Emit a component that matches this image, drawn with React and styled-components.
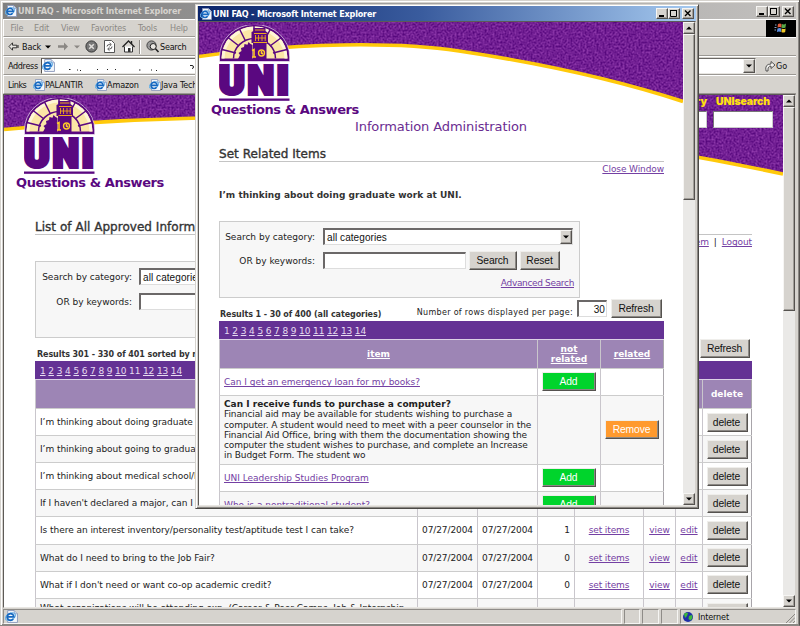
import React from "react";
import styled, { createGlobalStyle, css } from "styled-components";

const Global = createGlobalStyle`
  * { box-sizing: border-box; }
  body { margin: 0; background: #d6d3ce; overflow: hidden; }
`;
const verdana = '"DejaVu Sans", Verdana, sans-serif';
const tahoma = '"DejaVu Sans Condensed", Tahoma, sans-serif';
const arial = '"Liberation Sans", Arial, sans-serif';

const raised = css`
  background: #d6d3ce;
  border: 1px solid;
  border-color: #f6f5f3 #55524f #55524f #f6f5f3;
  box-shadow: inset -1px -1px 0 #a19e99;
`;

/* ---------- window chrome ---------- */
const Desktop = styled.div`
  position: relative;
  width: 800px;
  height: 626px;
  overflow: hidden;
  font-family: ${verdana};
  font-size: 9px;
  color: #222;
  white-space: nowrap;
`;
const BackWindow = styled.div`
  display: flex;
  flex-direction: column;
  width: 800px;
  height: 626px;
  padding: 3px 3px 1px 3px;
  background: #d6d3ce;
  border-right: 1px solid #55524f;
  border-bottom: 1px solid #8a8783;
  box-shadow: inset 1px 1px 0 #d6d3ce, inset 2px 2px 0 #fff, inset -1px -1px 0 #8a8783;
`;
const PopupWindow = styled.div`
  position: absolute;
  left: 195px;
  top: 4px;
  width: 504px;
  height: 505px;
  display: flex;
  flex-direction: column;
  padding: 1px 2px 2px 2px;
  background: #d6d3ce;
  border: 1px solid;
  border-color: #d6d3ce #4a4845 #4a4845 #d6d3ce;
  box-shadow: inset 1px 1px 0 #fff, inset -1px -1px 0 #8a8783;
`;
const TitleBar = styled.div`
  display: flex;
  align-items: center;
  flex: none;
  height: ${(p) => (p.$active ? 15 : 16)}px;
  padding: 0 2px;
  color: ${(p) => (p.$active ? "#fff" : "#d6d3ce")};
  background: ${(p) =>
    p.$active
      ? "linear-gradient(90deg, #0a246a, #3a5c9e 45%, #a6caf0)"
      : "linear-gradient(90deg, #808080, #c2c0be)"};
  font: bold 9px ${tahoma};
  letter-spacing: -0.19px;
`;
const TitleText = styled.span`
  flex: 1;
  margin-left: 1px;
`;
const CaptionButton = styled.span`
  ${raised}
  display: flex;
  width: 12px;
  height: 11px;
  margin-left: ${(p) => p.$gap || 0}px;
  svg { display: block; }
`;
const Bar = styled.div`
  display: flex;
  align-items: center;
  flex: none;
  height: ${(p) => p.$h}px;
  padding-left: 4px;
  border-top: 1px solid #fff;
  border-bottom: 1px solid #9b9893;
  border-left: 1px solid #fff;
  font: 9px ${tahoma};
  letter-spacing: -0.15px;
  color: ${(p) => (p.$dim ? "#8b8884" : "#111")};
`;
const BarItem = styled.span`
  display: flex;
  align-items: center;
  flex: none;
  width: ${(p) => p.$w}px;
  letter-spacing: ${(p) => p.$ls || -0.15}px;
`;
const Throbber = styled.span`
  display: flex;
  align-items: center;
  justify-content: center;
  width: 30px;
  height: 17px;
  margin-left: auto;
  background: #000;
`;
const AddressField = styled.span`
  display: flex;
  align-items: center;
  flex: 1;
  height: 16px;
  background: #fff;
  border: 1px solid;
  border-color: #6b6865 #e8e6e2 #e8e6e2 #55524f;
`;
const AddressTail = styled.span`
  display: flex;
  align-items: center;
  width: 40px;
  height: 18px;
  padding-left: 9px;
  font-size: 9px;
`;
const DropButton = styled.span`
  ${raised}
  display: flex;
  align-items: center;
  justify-content: center;
  flex: none;
  width: 12px;
  height: 14px;
  margin-left: auto;
`;
const Viewport = styled.div`
  display: flex;
  flex: 1;
  min-height: 0;
  border-top: 1px solid #5d5a57;
  border-left: 1px solid #5d5a57;
  border-right: 1px solid #d6d3ce;
  border-bottom: 1px solid #e8e6e2;
`;
const Page = styled.div`
  flex: 1;
  min-width: 0;
  overflow: hidden;
  background: #fff;
`;
const Scrollbar = styled.div`
  display: flex;
  flex-direction: column;
  flex: none;
  width: 12px;
  background: #eae9e7;
`;
const ScrollButton = styled.span`
  ${raised}
  display: flex;
  align-items: center;
  justify-content: center;
  height: 12px;
`;
const Thumb = styled.span`
  ${raised}
  height: ${(p) => p.$h}px;
  margin-bottom: auto;
`;
const StatusBar = styled.div`
  display: flex;
  gap: 2px;
  flex: none;
  height: 15px;
  margin-top: 1px;
  font: 9px ${tahoma};
  letter-spacing: -0.15px;
  color: #111;
`;
const StatusPane = styled.span`
  display: flex;
  align-items: center;
  gap: 4px;
  flex: ${(p) => (p.$w ? "none" : 1)};
  width: ${(p) => p.$w || 0}px;
  padding-left: 1px;
  border: 1px solid;
  border-color: #8f8c88 #f6f5f3 #f6f5f3 #8f8c88;
`;
const Grip = styled.span`
  display: flex;
  align-self: flex-end;
  margin-left: auto;
`;

/* ---------- page content ---------- */
const Banner = styled.header`
  position: relative;
  height: 81px;
  > svg:first-child { display: block; }
`;
const LogoMark = styled.svg`
  position: absolute;
  left: 20px;
  top: 3px;
`;
const BannerSearch = styled.div`
  position: absolute;
  right: 10px;
  top: 0;
  display: flex;
  gap: 6px;
  color: #ffe010;
  font: 900 10.5px Inter, ${arial};
`;
const BannerField = styled.label`
  display: flex;
  flex-direction: column;
  gap: 2px;
  width: 60px;
  text-align: ${(p) => (p.$end ? "right" : "center")};
  letter-spacing: -0.12px;
  line-height: 14px;
`;
const BannerInput = styled.span`
  height: 17px;
  background: #fff;
  border: 1px solid;
  border-color: #777 #ccc #ccc #777;
`;
const Brand = styled.div`
  height: 14px;
  padding-left: 12px;
  font: bold 13px/14px ${verdana};
  letter-spacing: -0.42px;
  color: #5a0880;
`;
const Subtitle = styled.div`
  height: 19px;
  padding-left: 156px;
  font-size: 13px;
  line-height: 19px;
  letter-spacing: -0.097px;
  color: #6a2c91;
`;
const SectionTitle = styled.h1`
  width: ${(p) => p.$w}px;
  height: ${(p) => p.$h}px;
  margin: ${(p) => p.$top}px 0 0 ${(p) => p.$left}px;
  border-bottom: 1px solid #c4c4c4;
  font: normal 12px/13px ${verdana};
  letter-spacing: 0.03px;
  -webkit-text-stroke: 0.35px #333;
  color: #333;
`;
const TopLinks = styled.div`
  display: flex;
  justify-content: flex-end;
  gap: 5px;
  width: ${(p) => p.$w}px;
  height: 15px;
  line-height: 15px;
  letter-spacing: -0.1px;
`;
const Link = styled.a`
  color: #7440a3;
  text-decoration: underline;
  text-underline-offset: 1px;
  text-decoration-thickness: 1px;
  text-decoration-skip-ink: none;
`;
const Question = styled.h2`
  margin: 10px 0 0 20px;
  font: bold 9px/16px ${verdana};
  letter-spacing: 0.03px;
  color: #333;
`;
const SearchBox = styled.form`
  display: flex;
  flex-direction: column;
  width: ${(p) => p.$w}px;
  height: 77px;
  margin: ${(p) => p.$top}px 0 0 ${(p) => p.$left}px;
  padding: 6px 5px 0 0;
  background: #f7f7f7;
  border: 1px solid #ccc;
`;
const FormRow = styled.div`
  display: flex;
  align-items: center;
  height: ${(p) => p.$h}px;
  margin-bottom: ${(p) => p.$gap}px;
`;
const Label = styled.span`
  width: ${(p) => p.$w}px;
  margin-right: ${(p) => 103 - p.$w}px;
  text-align: right;
`;
const Field = styled.span`
  display: flex;
  align-items: center;
  flex: none;
  width: ${(p) => p.$w}px;
  height: 17px;
  padding-left: 2px;
  background: #fff;
  border: 2px solid;
  border-width: 2px 1px 1px 2px;
  border-color: #6b6868 #ddd #ddd #6b6868;
  font: 10px ${arial};
  letter-spacing: 0.07px;
  color: #111;
`;
const RowCount = styled(Field)`
  width: 30px;
  justify-content: flex-end;
  padding-right: 1px;
`;
const Button = styled.button`
  flex: none;
  width: ${(p) => p.$w}px;
  height: ${(p) => p.$h || 19}px;
  margin: 0 0 0 ${(p) => p.$ml || 0}px;
  padding: 1px 1px 0 0;
  background: ${(p) => p.$bg || "#d6d3ce"};
  border: 1px solid;
  border-color: #efeeeb #55524f #55524f #efeeeb;
  box-shadow: inset -1px -1px 0 #8b8884;
  font: 10.3px ${arial};
  letter-spacing: -0.12px;
  line-height: 14px;
  color: ${(p) => (p.$bg ? "#fff" : "#111")};
`;
const AdvancedRow = styled.div`
  padding-top: 1px;
  text-align: right;
  letter-spacing: -0.34px;
  line-height: 11px;
`;
const ResultBar = styled.div`
  display: flex;
  justify-content: space-between;
  width: ${(p) => p.$w}px;
  height: 23px;
  margin-left: ${(p) => p.$left}px;
  padding: 0 2px 0 1px;
`;
const ResultText = styled.span`
  padding-top: 12px;
  font: bold 8px/10px ${verdana};
  letter-spacing: -0.08px;
  color: #333;
`;
const RowsControl = styled.div`
  display: flex;
  align-items: flex-start;
  padding-top: ${(p) => p.$top}px;
`;
const RowsLabel = styled.span`
  margin-right: 4px;
  padding-top: 7px;
  font-size: 8px;
  line-height: 13px;
  letter-spacing: 0.31px;
`;
const CountSlot = styled.span`
  display: flex;
  padding-top: 1px;
`;
const Table = styled.div`
  width: ${(p) => p.$w}px;
  margin-left: ${(p) => p.$left}px;
`;
const Pager = styled.div`
  display: flex;
  height: 18px;
  padding: 1px 0 0 5px;
  align-items: center;
  background: #643294;
  color: #e6dcf0;
  letter-spacing: -0.13px;
  white-space: pre;
  a { text-decoration: underline; text-underline-offset: 1px; text-decoration-skip-ink: none; }
`;
const Row = styled.div`
  display: grid;
  grid-template-columns: ${(p) => p.$cols};
  height: ${(p) => p.$h}px;
  background: ${(p) => (p.$head ? "#9d85b5" : p.$alt ? "#f7f7f7" : "#fff")};
  color: ${(p) => (p.$head ? "#fff" : "#222")};
  border-top: 1px solid ${(p) => (p.$head ? "#dcd2e6" : "#ccc")};
`;
const Cell = styled.div`
  display: flex;
  align-items: center;
  justify-content: ${(p) => p.$align || "center"};
  min-width: 0;
  overflow: hidden;
  padding: 0 4px;
  border-left: 1px solid #c9c6cc;
  letter-spacing: ${(p) => p.$ls || 0}px;
  line-height: 10.17px;
  white-space: pre;
  &:last-child { border-right: 1px solid #a8a5aa; }
`;
const HeadLabel = styled.b`
  white-space: pre-line;
  text-align: center;
  text-decoration: ${(p) => (p.$plain ? "none" : "underline")};
  text-underline-offset: 1px;
`;
const Answer = styled.div`
  white-space: pre;
  letter-spacing: -0.1px;
  b { letter-spacing: 0; }
`;

/* ---------- drawings ---------- */
const IEIcon = ({ s = 12 }) => (
  <svg width={s} height={s} viewBox="0 0 12 12">
    <path d="M2.5 .5h6l3 3v8h-9z" fill="#f3f6fb" stroke="#8796b8" strokeWidth=".8" />
    <path d="M8.5 .5v3h3" fill="#c9d5ec" stroke="#8796b8" strokeWidth=".6" />
    <ellipse cx="5" cy="6.2" rx="5" ry="3" fill="none" stroke="#67b1e8" strokeWidth="1" transform="rotate(-28 5 6.2)" />
    <path d="M2 6.4h6.2A3.1 3.1 0 1 0 7.6 8.3" fill="none" stroke="#1668c0" strokeWidth="1.6" />
  </svg>
);
const Tri = ({ up, fill = "#000" }) => (
  <svg width="6" height="4" viewBox="0 0 6 4">
    <path d={up ? "M0 3.5L3 .5 6 3.5z" : "M0 .5h6L3 3.5z"} fill={fill} />
  </svg>
);
const WindowButtons = () => (
  <>
    <CaptionButton>
      <svg width="10" height="9"><rect x="2" y="6" width="5" height="2" /></svg>
    </CaptionButton>
    <CaptionButton>
      <svg width="10" height="9">
        <path d="M1.5 1v6.5h6V1M1 1.5h7" fill="none" stroke="#000" />
      </svg>
    </CaptionButton>
    <CaptionButton $gap={2}>
      <svg width="10" height="9">
        <path d="M2 1.5l5.5 5.5M7.5 1.5L2 7" stroke="#000" strokeWidth="1.4" />
      </svg>
    </CaptionButton>
  </>
);
const Scroll = ({ h }) => (
  <Scrollbar>
    <ScrollButton><Tri up /></ScrollButton>
    <Thumb $h={h} />
    <ScrollButton><Tri /></ScrollButton>
  </Scrollbar>
);
const Wave = ({ id, w, curve }) => (
  <svg width={w} height="84">
    <defs>
      <clipPath id={id + "c"}><path d={`${curve}V0H0z`} /></clipPath>
      <filter id={id + "n"} x="0" y="0" width="1" height="1">
        <feTurbulence type="fractalNoise" baseFrequency=".5" numOctaves="2" seed="4" />
        <feColorMatrix values="0 0 0 0 .45  0 0 0 0 .1  0 0 0 0 .58  1.1 0 0 0 -.25" />
      </filter>
    </defs>
    <g clipPath={`url(#${id}c)`}>
      <rect width={w} height="84" fill="#55067c" />
      <rect width={w} height="84" filter={`url(#${id}n)`} />
    </g>
    <path d={curve} fill="none" stroke="#ffc90a" strokeWidth="3.6" />
  </svg>
);
const Logo = () => (
  <LogoMark width="72" height="78" viewBox="0 0 72 78">
    <path d="M0.5 36.5V32A35 32.5 0 0 1 70.7 32V36.5z" fill="#5a0880" stroke="#fff" strokeWidth=".6" />
    <path d="M2.5 33.5A33 32 0 0 1 68.5 33.5z" fill="#fbe7a6" />
    <path d="M2.5 33.5A33 32 0 0 1 68.5 33.5h-3A30 29 0 0 0 5.5 33.5z" fill="#fff6d6" />
    <path d="M14.5 33.5A21 20 0 0 1 56.5 33.5" fill="none" stroke="#5a0880" strokeWidth="1.5" />
    <path d="M3 24.5L17 28M9 12.5L20 21M20.5 4L26.5 16M35 1V14M51.5 4L45 16M62.5 12.5L51 21M68 24.5L54 28" stroke="#5a0880" strokeWidth="1.5" />
    <path d="M19 34l2-4-1.5-2 3-2-.5-3 3-1 .5-3 3 .8 1-2.8 2 2 2 1v14z" fill="#5a0880" />
    <path d="M34 34V18h-1.5V7l2-1V3l12 0V6l2.5 2v10.5h-1.5V34z" fill="#5a0880" />
    <path d="M35 8.5h12.500M36 5h9.500M34.500 17.500h13.500" stroke="#f0a81c" strokeWidth="1.1" />
    <path d="M36.5 10v6M39.5 10v6M43 10v6M46.2 10v6M36 13h11" stroke="#f0a81c" strokeWidth=".9" />
    <circle cx="42.5" cy="28" r="3" fill="#5a0880" stroke="#ffcc28" strokeWidth="1.3" />
    <path d="M42.500 26v2l1.500 1M33 25.500l2-1v7.500M33 32h4" fill="none" stroke="#ffcc28" strokeWidth="1.6" />
    <g fill="#5a0880" stroke="#5a0880" strokeWidth="4" fontFamily="Roboto, sans-serif" fontWeight="900" fontSize="38">
      <text x="0" y="68.5" textLength="25.6" lengthAdjust="spacingAndGlyphs">U</text>
      <text x="28.8" y="68.5" textLength="26" lengthAdjust="spacingAndGlyphs">N</text>
      <text x="57.8" y="68.5" textLength="12" lengthAdjust="spacingAndGlyphs">I</text>
    </g>
    <rect x="0" y="73.5" width="70.5" height="2.3" fill="#5a0880" />
  </LogoMark>
);

const PageLinks = ({ current }) => (
  <Pager>
    {Array.from({ length: 14 }, (_, i) => i + 1).map((n) => (
      <React.Fragment key={n}>
        {n === current ? <span>{n}</span> : <a>{n}</a>}
        <span> </span>
      </React.Fragment>
    ))}
  </Pager>
);

/* ---------- main window ---------- */
const QUESTIONS = [
  ["I’m thinking about doing graduate work at UNI.", 0],
  ["I’m thinking about going to graduate school.", 0],
  ["I’m thinking about medical school/law school.", 0],
  ["If I haven't declared a major, can I get help?", 0],
  ["Is there an interest inventory/personality test/aptitude test I can take?", 1],
  ["What do I need to bring to the Job Fair?", 0],
  ["What if I don't need or want co-op academic credit?", 0],
  ["What organizations will be attending exp. (Career & Peer Camps, Job & Internship\nFair)?", 0],
];
const LIST_COLS = "382px 60px 60px 37px 69px 32px 27px 50px";

const MainPage = () => (
  <Page>
    <Banner>
      <Wave id="m" w={779} curve="M0 34.5C200 15 420 20 560 41C640 52 700 62 779 79" />
      <Logo />
      <BannerSearch>
        <BannerField $end>library<BannerInput /></BannerField>
        <BannerField>UNIsearch<BannerInput /></BannerField>
      </BannerSearch>
    </Banner>
    <Brand>Questions &amp; Answers</Brand>
    <SectionTitle $w={717} $h={14} $top={31} $left={31}>
      List of All Approved Information
    </SectionTitle>
    <TopLinks $w={748}>
      <Link>Add Item</Link>|<Link>Logout</Link>
    </TopLinks>
    <SearchBox $w={361} $top={11} $left={31}>
      <FormRow $h={17} $gap={7}>
        <Label $w={96}>Search by category:</Label>
        <Field $w={250}>all categories</Field>
      </FormRow>
      <FormRow $h={19} $gap={0}>
        <Label $w={96}>OR by keywords:</Label>
        <Field $w={143} />
      </FormRow>
    </SearchBox>
    <ResultBar $w={716} $left={32}>
      <ResultText>Results 301 - 330 of 401 sorted by name</ResultText>
      <RowsControl $top={1}>
        <Button $w={50}>Refresh</Button>
      </RowsControl>
    </ResultBar>
    <Table $w={717} $left={31}>
      <PageLinks current={11} />
      <Row $head $h={29} $cols={LIST_COLS}>
        <Cell /><Cell /><Cell /><Cell /><Cell /><Cell /><Cell />
        <Cell><HeadLabel $plain>delete</HeadLabel></Cell>
      </Row>
      {QUESTIONS.map(([q, n], i) => (
        <Row key={q} $h={i === 7 ? 29 : 27.12} $alt={i % 2} $cols={LIST_COLS}>
          <Cell $align="flex-start" $ls={-0.045}>{q}</Cell>
          <Cell $ls={-0.09}>07/27/2004</Cell>
          <Cell $ls={-0.09}>07/27/2004</Cell>
          <Cell $align="flex-end">{n}</Cell>
          <Cell $ls={-0.12}><Link>set items</Link></Cell>
          <Cell><Link>view</Link></Cell>
          <Cell><Link>edit</Link></Cell>
          <Cell><Button $w={41}>delete</Button></Cell>
        </Row>
      ))}
    </Table>
  </Page>
);

const MainWindow = () => (
  <BackWindow>
    <TitleBar>
      <IEIcon />
      <TitleText>UNI FAQ - Microsoft Internet Explorer</TitleText>
      <WindowButtons />
    </TitleBar>
    <Bar $h={18} $dim>
      <BarItem $w={26}>&nbsp;File</BarItem>
      <BarItem $w={27}>Edit</BarItem>
      <BarItem $w={30}>View</BarItem>
      <BarItem $w={47}>Favorites</BarItem>
      <BarItem $w={32}>Tools</BarItem>
      <BarItem $w={30}>Help</BarItem>
      <Throbber>
        <svg width="14" height="12" viewBox="0 0 14 12">
          <path d="M4 2q2-1 3.500 0v3.500q-2-1-4 0z" fill="#e05a3a" />
          <path d="M8 2q2 1 4-.500l-.5 4q-2 1-4 0z" fill="#58a848" />
          <path d="M3.500 6.500q2-1 3.800 0l-.4 3.500q-2-1-4 0z" fill="#5b8ee0" />
          <path d="M7.800 6.500q2 1 3.800 0l-.4 3.500q-2 1-3.800 0z" fill="#f0c828" />
          <path d="M1 3h1.500M.5 5.500h2M.5 8h1.500" stroke="#8aa4c8" />
        </svg>
      </Throbber>
    </Bar>
    <Bar $h={19}>
      <BarItem $w={14}>
        <svg width="11" height="9" viewBox="0 0 11 9">
          <path d="M4.500 .8L1 4.500l3.500 3.700V5.800h4.300V3.200H4.500z" fill="#e8e6e2" stroke="#222" strokeWidth=".9" />
          <path d="M10 3v3" stroke="#222" />
        </svg>
      </BarItem>
      <BarItem $w={23}>Back</BarItem>
      <BarItem $w={13}><Tri /></BarItem>
      <BarItem $w={16}>
        <svg width="11" height="9" viewBox="0 0 11 9">
          <path d="M0 3.200h6V.5l4 4-4 4V5.800H0z" fill="#8b8884" />
        </svg>
      </BarItem>
      <BarItem $w={11}><Tri fill="#8b8884" /></BarItem>
      <BarItem $w={19}>
        <svg width="13" height="13" viewBox="0 0 13 13">
          <circle cx="6.500" cy="6.500" r="5.600" fill="#777" stroke="#333" />
          <path d="M4.200 4.200l4.600 4.600M8.800 4.200L4.200 8.800" stroke="#e0dedb" strokeWidth="1.500" />
        </svg>
      </BarItem>
      <BarItem $w={18}>
        <svg width="11" height="13" viewBox="0 0 11 13">
          <path d="M.5 .5h7l3 3v9H.5z" fill="#fff" stroke="#555" />
          <path d="M3 6.500q0-2 2.500-2h1M5.500 2.800l1.800 1.700-1.800 1.700M8 6.500q0 2.500-2.500 2.500h-1M5.500 7.300L3.700 9l1.800 1.700" fill="none" stroke="#444" strokeWidth=".9" />
        </svg>
      </BarItem>
      <BarItem $w={17}>
        <svg width="13" height="13" viewBox="0 0 13 13">
          <path d="M2.500 6.500v5.500h8V6.500" fill="#fff" stroke="#333" />
          <path d="M.5 7L6.500 1l6 6" fill="none" stroke="#222" strokeWidth="1.300" />
          <path d="M9.500 1v3" stroke="#222" strokeWidth="1.400" />
          <rect x="6" y="8" width="2.500" height="4" fill="#333" />
        </svg>
      </BarItem>
      <BarItem $w={7}>
        <svg width="2" height="14"><path d="M.5 0v14" stroke="#8b8884" /><path d="M1.500 0v14" stroke="#fff" /></svg>
      </BarItem>
      <BarItem $w={14}>
        <svg width="14" height="13" viewBox="0 0 14 13">
          <circle cx="5.500" cy="5.500" r="4.600" fill="#9a9a9a" stroke="#444" />
          <circle cx="7.200" cy="6.500" r="3" fill="#e8e6e2" stroke="#222" />
          <path d="M9.500 8.700L12.500 12" stroke="#222" strokeWidth="1.600" />
        </svg>
      </BarItem>
      <BarItem $w={40} $ls={-0.25}>Search</BarItem>
    </Bar>
    <Bar $h={19}>
      <BarItem $w={33} $ls={-0.35}>Address</BarItem>
      <AddressField>
        <IEIcon s={13} />
        <svg width="142" height="10" viewBox="0 0 142 10">
          <path d="M14 8.500h1.500M22 9h1M25 9.500h1M42 8.500h1M52 8.500h1M60 8.500h1M84 9h1.500M96 9h1M101 9.500h1M135 4.500h2q1.500 0 1.500 1.500t-1.500 1.500" fill="none" stroke="#222" />
        </svg>
        <DropButton><Tri /></DropButton>
      </AddressField>
      <AddressTail>
        <svg width="11" height="12" viewBox="0 0 11 12">
          <path d="M1 11Q-.5 4 6 4V1.500L10 5 6 8.500V6Q2.500 6 3 11z" fill="#f4f3f1" stroke="#333" strokeWidth=".8" />
        </svg>
        Go
      </AddressTail>
    </Bar>
    <Bar $h={19}>
      <BarItem $w={25} $ls={-0.5}>Links</BarItem>
      <BarItem $w={62}><IEIcon />PALANTIR</BarItem>
      <BarItem $w={54}><IEIcon />Amazon</BarItem>
      <BarItem $w={60}><IEIcon />Java Tech</BarItem>
    </Bar>
    <Viewport>
      <MainPage />
      <Scroll h={204} />
    </Viewport>
    <StatusBar>
      <StatusPane><IEIcon s={13} /></StatusPane>
      <StatusPane $w={16} />
      <StatusPane $w={17} />
      <StatusPane $w={17} />
      <StatusPane $w={116}>
        <svg width="12" height="12" viewBox="0 0 12 12">
          <circle cx="6" cy="6" r="5" fill="#1f2fa8" />
          <path d="M2 3q2-2 4-1l-1 3-2 2zM7 5l3-1 .5 3-2 2.500L6.500 8z" fill="#3cb83c" />
        </svg>
        Internet
        <Grip>
          <svg width="10" height="10" viewBox="0 0 10 10">
            <path d="M1 10l9-9M4.500 10L10 4.500M8 10l2-2" stroke="#8b8884" />
          </svg>
        </Grip>
      </StatusPane>
    </StatusBar>
  </BackWindow>
);

/* ---------- popup window ---------- */
const ITEM_COLS = "318px 63px 64px";
const AddRow = ({ children, alt }) => (
  <Row $h={27.2} $alt={alt} $cols={ITEM_COLS}>
    <Cell $align="flex-start" $ls={-0.02}><Link>{children}</Link></Cell>
    <Cell><Button $w={54} $bg="#00d42c">Add</Button></Cell>
    <Cell />
  </Row>
);

const Popup = () => (
  <PopupWindow>
    <TitleBar $active>
      <IEIcon />
      <TitleText>UNI FAQ - Microsoft Internet Explorer</TitleText>
      <WindowButtons />
    </TitleBar>
    <Viewport>
      <Page>
        <Banner>
          <Wave id="p" w={484} curve="M0 34.5C100 20 200 20 260 29S400 52 484 79.5" />
          <Logo />
        </Banner>
        <Brand>Questions &amp; Answers</Brand>
        <Subtitle>Information Administration</Subtitle>
        <SectionTitle $w={445} $h={14} $top={12} $left={20}>Set Related Items</SectionTitle>
        <TopLinks $w={465}><Link>Close Window</Link></TopLinks>
        <Question>I’m thinking about doing graduate work at UNI.</Question>
        <SearchBox $w={361} $top={18} $left={20}>
          <FormRow $h={17} $gap={6}>
            <Label $w={95}>Search by category:</Label>
            <Field $w={250}>all categories<DropButton><Tri /></DropButton></Field>
          </FormRow>
          <FormRow $h={19} $gap={7}>
            <Label $w={95}>OR by keywords:</Label>
            <Field $w={143} />
            <Button $w={48} $ml={3}>Search</Button>
            <Button $w={40} $ml={3}>Reset</Button>
          </FormRow>
          <AdvancedRow><Link>Advanced Search</Link></AdvancedRow>
        </SearchBox>
        <ResultBar $w={445} $left={20}>
          <ResultText>Results 1 - 30 of 400 (all categories)</ResultText>
          <RowsControl $top={1}>
            <RowsLabel>Number of rows displayed per page:</RowsLabel>
            <CountSlot><RowCount>30</RowCount></CountSlot>
            <Button $w={51} $ml={4}>Refresh</Button>
          </RowsControl>
        </ResultBar>
        <Table $w={445} $left={20}>
          <PageLinks current={1} />
          <Row $head $h={28.5} $cols={ITEM_COLS}>
            <Cell><HeadLabel>item</HeadLabel></Cell>
            <Cell><HeadLabel>{"not\nrelated"}</HeadLabel></Cell>
            <Cell><HeadLabel>related</HeadLabel></Cell>
          </Row>
          <AddRow>Can I get an emergency loan for my books?</AddRow>
          <Row $h={69} $alt $cols={ITEM_COLS}>
            <Cell $align="flex-start">
              <Answer>
                <b>Can I receive funds to purchase a computer?</b>
                {`
Financial aid may be available for students wishing to purchase a
computer. A student would need to meet with a peer counselor in the
Financial Aid Office, bring with them the documentation showing the
computer the student wishes to purchase, and complete an Increase
in Budget Form. The student wo`}
              </Answer>
            </Cell>
            <Cell />
            <Cell><Button $w={54} $bg="#ff9a2e">Remove</Button></Cell>
          </Row>
          <AddRow>UNI Leadership Studies Program</AddRow>
          <AddRow alt>Who is a nontraditional student?</AddRow>
        </Table>
      </Page>
      <Scroll h={166} />
    </Viewport>
  </PopupWindow>
);

export default function App() {
  return (
    <Desktop>
      <Global />
      <MainWindow />
      <Popup />
    </Desktop>
  );
}
